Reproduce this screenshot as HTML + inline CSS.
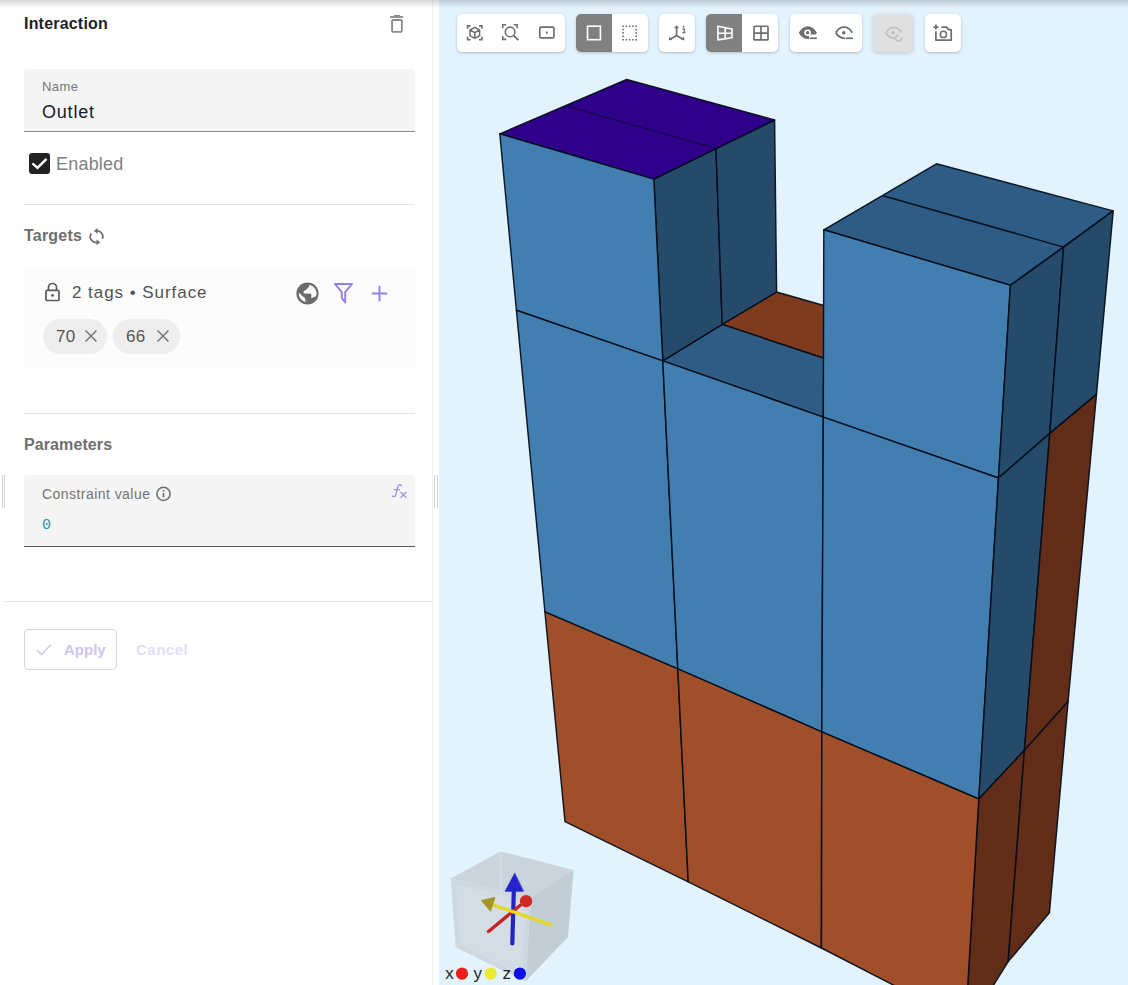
<!DOCTYPE html>
<html><head><meta charset="utf-8">
<style>
*{box-sizing:border-box;margin:0;padding:0}
html,body{width:1128px;height:985px;overflow:hidden;background:#fff;font-family:"Liberation Sans",sans-serif;position:relative}
.abs{position:absolute}
#panel{left:0;top:0;width:432px;height:985px;background:#fff}
#vline{left:432px;top:0;width:1px;height:985px;background:#f0f0f0}
#view{left:439px;top:0;width:689px;height:985px;background:#e2f3fd;overflow:hidden}
#topshadow{left:0;top:0;width:1128px;height:8px;background:linear-gradient(rgba(0,0,0,0.16),rgba(0,0,0,0));z-index:20}
.t{position:absolute;white-space:pre;line-height:1}
.field{position:absolute;background:#f5f5f5;border-radius:4px 4px 0 0}
.div{position:absolute;height:1px;background:#e3e3e3}
.tb{position:absolute;top:14px;height:38px;background:#fff;border-radius:5px;box-shadow:0 1px 3px rgba(0,0,0,0.22);overflow:hidden}
.tb .act{position:absolute;top:0;height:38px;background:#808080}
.tb svg{position:absolute}
</style></head>
<body>
<div id="panel" class="abs">
  <div class="t" style="left:24px;top:16px;font-size:16px;font-weight:700;color:#1e1e24;letter-spacing:0.2px">Interaction</div>
  <!-- trash -->
  <svg class="abs" style="left:0;top:0" width="440" height="40" viewBox="0 0 440 40">
    <rect x="390.1" y="16.1" width="13.2" height="1.8" fill="#8a8a8a"/>
    <rect x="394.1" y="15" width="5.8" height="1.4" fill="#8a8a8a"/>
    <rect x="392.05" y="20" width="9.8" height="11.8" rx="1" fill="none" stroke="#8a8a8a" stroke-width="1.85"/>
  </svg>
  <!-- name field -->
  <div class="field" style="left:24px;top:69px;width:391px;height:63px;border-bottom:1px solid #8a8a8a"></div>
  <div class="t" style="left:42px;top:80px;font-size:13px;color:#777;letter-spacing:0.45px">Name</div>
  <div class="t" style="left:42px;top:103px;font-size:18px;color:#1c1c22;letter-spacing:0.8px">Outlet</div>
  <!-- checkbox -->
  <div class="abs" style="left:29px;top:153px;width:21px;height:21px;background:#222;border-radius:3px"></div>
  <svg class="abs" style="left:29px;top:153px" width="21" height="21" viewBox="0 0 21 21"><path d="M3.4 10.3 L8.5 14.9 L17.5 5.8" fill="none" stroke="#fff" stroke-width="2.4"/></svg>
  <div class="t" style="left:56px;top:155px;font-size:18px;color:#808080;letter-spacing:0.2px">Enabled</div>
  <div class="div" style="left:24px;top:204px;width:391px"></div>
  <!-- targets -->
  <div class="t" style="left:24px;top:228px;font-size:16px;font-weight:700;color:#6e6e6e;letter-spacing:0.2px">Targets</div>
  <svg class="abs" style="left:0;top:200px" width="120" height="60" viewBox="0 200 120 60" fill="none" stroke="#6e6e6e" stroke-width="1.7">
    <path d="M96.4 231 A5.7 5.7 0 0 1 102.4 238.9"/>
    <path d="M91.3 233.5 A5.7 5.7 0 0 0 97.6 242.2"/>
    <path d="M93.9 230.9 L97.6 228 V233.8 Z M100.2 242.3 L96.5 239.4 V245.2 Z" fill="#6e6e6e" stroke="none"/>
  </svg>
  <div class="abs" style="left:24px;top:268px;width:392px;height:100px;background:#fcfcfc;border-radius:4px"></div>
  <!-- lock -->
  <svg class="abs" style="left:44px;top:282px" width="17" height="20" viewBox="0 0 17 20">
    <path d="M4.5 8 V5.5 A4 4 0 0 1 12.5 5.5 V8" fill="none" stroke="#5a5a5a" stroke-width="1.7"/>
    <rect x="2" y="8.3" width="13" height="10.2" rx="1" fill="none" stroke="#5a5a5a" stroke-width="1.7"/>
    <circle cx="8.5" cy="13.4" r="1.4" fill="#5a5a5a"/>
  </svg>
  <div class="t" style="left:72px;top:284px;font-size:17px;letter-spacing:0.95px;color:#525252">2 tags • Surface</div>
  <!-- globe -->
  <svg class="abs" style="left:280px;top:270px" width="50" height="40" viewBox="280 270 50 40">
    <circle cx="307.5" cy="293.5" r="11.1" fill="#6b6b6b"/>
    <path d="M309.4 284.8 A8.8 8.8 0 0 1 316.1 296.2 L311.3 298.2 L311.3 293.8 L303.7 293.5 L303.7 290.9 L306.2 289.7 L308.8 287 Z" fill="#fcfcfc"/>
    <path d="M298.8 292.4 A8.8 8.8 0 0 0 305.8 302.1 L304.8 297.9 L301.5 295.2 Z" fill="#fcfcfc"/>
  </svg>
  <!-- filter -->
  <svg class="abs" style="left:333px;top:282px" width="21" height="22" viewBox="0 0 21 22">
    <path d="M2 2 H19 L12.2 10.2 V20.5 L8.8 16.2 V10.2 Z" fill="none" stroke="#8d83e4" stroke-width="1.9" stroke-linejoin="round"/>
  </svg>
  <!-- plus -->
  <svg class="abs" style="left:371px;top:285px" width="17" height="17" viewBox="0 0 17 17">
    <path d="M8.5 0.8 V16.2 M0.8 8.5 H16.2" stroke="#8d83e4" stroke-width="1.9"/>
  </svg>
  <!-- chips -->
  <div class="abs" style="left:43px;top:319px;width:64px;height:35px;background:#eeeeee;border-radius:18px"></div>
  <div class="t" style="left:56px;top:328px;font-size:17px;color:#555;letter-spacing:0.3px">70</div>
  <svg class="abs" style="left:84px;top:329px" width="14" height="14" viewBox="0 0 14 14"><path d="M1.5 1.5 L12.5 12.5 M12.5 1.5 L1.5 12.5" stroke="#777" stroke-width="1.5"/></svg>
  <div class="abs" style="left:113px;top:319px;width:67px;height:35px;background:#eeeeee;border-radius:18px"></div>
  <div class="t" style="left:126px;top:328px;font-size:17px;color:#555;letter-spacing:0.3px">66</div>
  <svg class="abs" style="left:156px;top:329px" width="14" height="14" viewBox="0 0 14 14"><path d="M1.5 1.5 L12.5 12.5 M12.5 1.5 L1.5 12.5" stroke="#777" stroke-width="1.5"/></svg>
  <div class="div" style="left:24px;top:413px;width:391px"></div>
  <!-- parameters -->
  <div class="t" style="left:24px;top:437px;font-size:16px;font-weight:700;color:#6e6e6e;letter-spacing:0.1px">Parameters</div>
  <div class="field" style="left:24px;top:475px;width:391px;height:72px;border-bottom:1px solid #555"></div>
  <div class="t" style="left:42px;top:487px;font-size:14px;color:#747474;letter-spacing:0.45px">Constraint value</div>
  <svg class="abs" style="left:155px;top:486px" width="17" height="16" viewBox="0 0 17 16">
    <circle cx="8.5" cy="7.9" r="6.6" fill="none" stroke="#6a6a6a" stroke-width="1.5"/>
    <rect x="7.7" y="7" width="1.6" height="4.3" fill="#6a6a6a"/>
    <circle cx="8.5" cy="4.8" r="0.95" fill="#6a6a6a"/>
  </svg>
  <svg class="abs" style="left:380px;top:475px" width="40" height="30" viewBox="380 475 40 30" fill="none" stroke="#9b92e6" stroke-width="1.3" stroke-linecap="round">
    <path d="M401.4 485.6C400.6 484.8 399.2 484.6 398.4 485.4C397.6 486.2 397.4 487.5 397.1 489.5L395.9 494.6C395.6 496 394.8 496.8 393.6 496.7C393 496.6 392.5 496.3 392.2 496"/>
    <path d="M394.3 489.6H399.6"/>
    <path d="M400.9 492.3L406 497.4M406 492.3L400.9 497.4"/>
  </svg>
  <div class="t" style="left:42px;top:518px;font-size:15px;color:#1d9aa3;font-family:'Liberation Mono'">0</div>
  <!-- drag handles -->
  <div class="abs" style="left:2px;top:475px;width:1px;height:33px;background:#d4d4d4"></div>
  <div class="abs" style="left:4px;top:475px;width:1px;height:33px;background:#d4d4d4"></div>
  <div class="div" style="left:5px;top:601px;width:427px;background:#e6e6e6"></div>
  <!-- buttons -->
  <div class="abs" style="left:24px;top:629px;width:93px;height:41px;border:1px solid #d6d2ef;border-radius:4px"></div>
  <svg class="abs" style="left:36px;top:643px" width="16" height="13" viewBox="0 0 16 13"><path d="M1 7 L5.5 11.5 L15 1.5" fill="none" stroke="#cfcbe9" stroke-width="1.6"/></svg>
  <div class="t" style="left:64px;top:642px;font-size:15px;font-weight:700;color:#cdc6f0">Apply</div>
  <div class="t" style="left:136px;top:642px;font-size:15px;font-weight:700;color:#e2def5;letter-spacing:0.5px">Cancel</div>
</div>
<div id="vline" class="abs"></div>
<div class="abs" style="left:434px;top:475px;width:1px;height:33px;background:#d4d4d4"></div>
<div class="abs" style="left:437px;top:475px;width:1px;height:33px;background:#d4d4d4"></div>
<div id="view" class="abs">
<!--SCENE-->
<svg class="abs" style="left:-439px;top:0" width="1128" height="985" viewBox="0 0 1128 985">
<g stroke="#020c18" stroke-opacity="0.92" stroke-width="1.45" stroke-linejoin="round">
<polygon points="722.2,324.4 776.6,292 823.8,305.5 823.8,358.3" fill="#7e3b1e"/>
<polygon points="662.8,360.9 722.2,324.4 823.8,358.3 823.3,417.1" fill="#2f5c85"/>
<polygon points="653.8,179.1 716,148.5 722.2,324.4 662.8,360.9" fill="#264a6a"/>
<polygon points="716,148.5 774.6,120 776.6,292 722.2,324.4" fill="#264a6a"/>
<polygon points="499.8,133.8 626.7,79.5 774.6,120 653.8,179.1" fill="#2f0089"/>
<polygon points="499.8,133.8 653.8,179.1 662.8,360.9 516.4,310.3" fill="#437eb0"/>
<polygon points="516.4,310.3 662.8,360.9 677.8,668.8 544.9,611.8" fill="#437eb0"/>
<polygon points="662.8,360.9 823.3,417.1 821.8,731.8 677.8,668.8" fill="#437eb0"/>
<polygon points="823.8,229.8 936.5,163.8 1113.2,210.9 1010.4,285.3" fill="#2f5c85"/>
<polygon points="823.8,229.8 1010.4,285.3 998.5,478 823.3,417.1" fill="#437eb0"/>
<polygon points="823.3,417.1 998.5,478 978.8,799 821.8,731.8" fill="#437eb0"/>
<polygon points="1010.4,285.3 1063.6,247.1 1049.8,433.4 998.5,478" fill="#264a6a"/>
<polygon points="1063.6,247.1 1113.2,210.9 1096.5,394.4 1049.8,433.4" fill="#264a6a"/>
<polygon points="998.5,478 1049.8,433.4 1024.4,750.3 978.8,799" fill="#264a6a"/>
<polygon points="1049.8,433.4 1096.5,394.4 1068.1,701.5 1024.4,750.3" fill="#612c18"/>
<polygon points="978.8,799 1024.4,750.3 1008.2,961.6 978,1010 966.3,1010" fill="#612c18"/>
<polygon points="1024.4,750.3 1068.1,701.5 1049.4,912.9 1008.2,961.6" fill="#612c18"/>
<polygon points="544.9,611.8 677.8,668.8 688.2,881.8 565,821.6" fill="#a14e2b"/>
<polygon points="677.8,668.8 821.8,731.8 821.4,948 688.2,881.8" fill="#a14e2b"/>
<polygon points="821.8,731.8 978.8,799 966.3,1010 941.8,1010 821.4,948" fill="#a14e2b"/>
<line x1="566.3" y1="106" x2="716" y2="148.5" stroke-width="1.2" stroke-opacity="0.6"/>
<line x1="883.1" y1="195.7" x2="1063.6" y2="247.1" stroke-width="1.5"/>
</g>
<g stroke="none">
 <polygon points="450.7,878.4 500.4,851.4 573.6,869.9 531,897.5" fill="#cad4dc"/>
 <polygon points="450.7,878.4 531,897.5 525.5,981.5 455.6,947.3" fill="#cfd8df"/>
 <polygon points="531,897.5 573.6,869.9 568,937 525.5,981.5" fill="#c2cdd5"/>
 <polygon points="456,884 526,901 522,975 460,944" fill="#d4dde4"/>
 <line x1="500.4" y1="852" x2="501" y2="912" stroke="#d6dee5" stroke-width="1.5"/>
</g>
<g stroke-linecap="round">
 <line x1="512.3" y1="943.5" x2="513.9" y2="888" stroke="#2323c8" stroke-width="4.2"/>
 <polygon points="514.6,873.6 505.2,891.2 523.2,891.2" fill="#2323c8" stroke="#2323c8" stroke-width="0.8" stroke-linejoin="round"/>
 <line x1="488.5" y1="931.5" x2="520" y2="905.5" stroke="#c42424" stroke-width="3.4"/>
 <circle cx="526" cy="901.2" r="6.2" fill="#d02828"/>
 <line x1="551" y1="924.8" x2="492" y2="904.5" stroke="#e2da22" stroke-width="3.4"/>
 <polygon points="481.8,900.6 494.6,897.8 490.4,910.6" fill="#a49628" stroke="#a49628" stroke-width="1.4" stroke-linejoin="round"/>
</g>
<g font-family="Liberation Sans" font-size="17" fill="#262626">
 <text x="445.2" y="978.8">x</text><text x="473.4" y="978.8">y</text><text x="502.6" y="978.8">z</text>
</g>
<circle cx="462" cy="973.6" r="6.1" fill="#ec1c1c"/>
<circle cx="490.7" cy="973.6" r="6.1" fill="#ecea2c"/>
<circle cx="519.9" cy="973.6" r="6.1" fill="#0a10e6"/>

</svg>
<!--/SCENE-->
</div>
<!--TOOLBAR-->
<div class="tb" style="left:457px;width:108px"></div>
<div class="tb" style="left:576px;width:72px"><div class="act" style="left:0;width:36px"></div></div>
<div class="tb" style="left:659px;width:36px"></div>
<div class="tb" style="left:706px;width:72px"><div class="act" style="left:0;width:36px"></div></div>
<div class="tb" style="left:790px;width:72px"></div>
<div class="tb" style="left:873px;width:40px;background:#e0e0e0;box-shadow:0 1px 4px rgba(0,0,0,0.18)"></div>
<div class="tb" style="left:925px;width:36px"></div>
<svg class="abs" style="left:0;top:0;z-index:5" width="1128" height="60" viewBox="0 0 1128 60" fill="none" stroke="#6e6e6e" stroke-width="1.6">
 <!-- 1 cube brackets -->
 <path d="M467.6 28.8V25.85H470.6M479 25.85H481.9V28.8M467.6 36.8V39.7H470.6M479 39.7H481.9V36.8"/>
 <path d="M474.8 27.3L479.6 30V35.6L474.8 38.3L470 35.6V30Z M470.2 30.1L474.8 32.7L479.4 30.1M474.8 32.7V38.2" stroke-width="1.5" stroke-linejoin="round"/>
 <!-- 2 zoom brackets -->
 <path d="M502.7 28.3V24.8H506.2M513.8 24.8H517.2V28.3M502.7 36V39.4H506.2"/>
 <circle cx="510.1" cy="31.9" r="4.8"/>
 <path d="M513.6 35.4L518.4 40.2" stroke-width="1.9"/>
 <!-- 3 rect dot -->
 <rect x="539.75" y="27.15" width="14.2" height="10.8" rx="1.3" stroke-width="1.7"/>
 <circle cx="546.8" cy="32.6" r="1.05" fill="#6e6e6e" stroke="none"/>
 <!-- 4 square white -->
 <rect x="587.5" y="26.2" width="12.9" height="13.5" stroke="#fff"/>
 <!-- 5 dotted square -->
 <g fill="#6e6e6e" stroke="none">
  <rect x="622.3" y="25.4" width="1.6" height="1.6"/><rect x="625.6" y="25.4" width="1.6" height="1.6"/><rect x="628.9" y="25.4" width="1.6" height="1.6"/><rect x="632.2" y="25.4" width="1.6" height="1.6"/><rect x="635.4" y="25.4" width="1.6" height="1.6"/>
  <rect x="622.3" y="38.9" width="1.6" height="1.6"/><rect x="625.6" y="38.9" width="1.6" height="1.6"/><rect x="628.9" y="38.9" width="1.6" height="1.6"/><rect x="632.2" y="38.9" width="1.6" height="1.6"/><rect x="635.4" y="38.9" width="1.6" height="1.6"/>
  <rect x="622.3" y="28.8" width="1.6" height="1.6"/><rect x="622.3" y="32.1" width="1.6" height="1.6"/><rect x="622.3" y="35.5" width="1.6" height="1.6"/>
  <rect x="635.4" y="28.8" width="1.6" height="1.6"/><rect x="635.4" y="32.1" width="1.6" height="1.6"/><rect x="635.4" y="35.5" width="1.6" height="1.6"/>
 </g>
 <!-- 6 axes -->
 <path d="M676.6 35.6V27.5M676.6 35.6L670.3 39.2M676.6 35.6L682.9 39.2" stroke-width="1.7"/>
 <path d="M674 28.3L676.6 25.2L679.2 28.3Z M668.6 40.3L669.6 36.6L672 40Z M684.6 40.3L681.2 40L683.6 36.6Z" fill="#6e6e6e" stroke="none"/>
 <circle cx="683.6" cy="26.7" r="0.9" fill="#6e6e6e" stroke="none"/>
 <path d="M682.2 28.8H684.2V32.6M682.3 32.6H685.4" stroke-width="1.3"/>
 <!-- 7 perspective white -->
 <path d="M717.9 26.3L732 29V37.7L717.9 39.9Z M725.2 27.7V38.6M717.9 33.2H732" stroke="#fff" stroke-linejoin="round"/>
 <!-- 8 grid -->
 <rect x="754" y="26.25" width="14" height="13.7" rx="1" stroke-width="1.7"/>
 <path d="M761 26.3V39.9M754 33.1H768" stroke-width="1.7"/>
 <!-- 9 eye filled -->
 <path d="M798.8 32.7C801 28.5 804.5 26.3 807.8 26.3C811.2 26.3 814.7 28.5 816.9 32.7C814.7 36.9 811.2 39.1 807.8 39.1C804.5 39.1 801 36.9 798.8 32.7Z" fill="#6e6e6e" stroke="none"/>
 <rect x="809" y="34.6" width="9" height="6" fill="#fff" stroke="none"/>
 <rect x="809.6" y="37.4" width="7.3" height="1.7" fill="#6e6e6e" stroke="none"/>
 <circle cx="807.6" cy="32.7" r="3.3" fill="#fff" stroke="none"/>
 <circle cx="807.6" cy="32.7" r="1.7" fill="#6e6e6e" stroke="none"/>
 <!-- 10 eye outline -->
 <path d="M835.8 32.7C838 29 841 27.2 844 27.2C847.2 27.2 850.1 29 852.2 32.7M835.8 32.7C838 36.4 841 38.2 845 38.3" stroke-width="1.8"/>
 <rect x="845.8" y="37.4" width="7.2" height="1.7" fill="#6e6e6e" stroke="none"/>
 <circle cx="843.8" cy="32.7" r="1.8" fill="#6e6e6e" stroke="none"/>
 <!-- 11 disabled eye -->
 <path d="M885.9 32.8C888 29.2 890.8 27.5 893.6 27.5C896.6 27.5 899.4 29.3 901.2 32.4M885.9 32.8C888 36.4 891 38.4 895.2 38.5" stroke="#bdbdbd" stroke-width="1.7"/>
 <circle cx="893" cy="32.8" r="1.8" fill="#bdbdbd" stroke="none"/>
 <path d="M901.4 37.2A3 3 0 1 1 898.6 35.2" stroke="#bdbdbd" stroke-width="1.5"/>
 <!-- 12 camera -->
 <path d="M933.4 27.1H938.4M935.9 24.6V29.6" stroke-width="1.7"/>
 <path d="M935.9 31.2V40.1H951.2V29.6H948.6L946.6 27.1H941.4" stroke-width="1.7" stroke-linejoin="round"/>
 <circle cx="943.4" cy="34.4" r="3.1" stroke-width="1.6"/>
</svg>
<!--/TOOLBAR-->
<div id="topshadow" class="abs"></div>
</body></html>
